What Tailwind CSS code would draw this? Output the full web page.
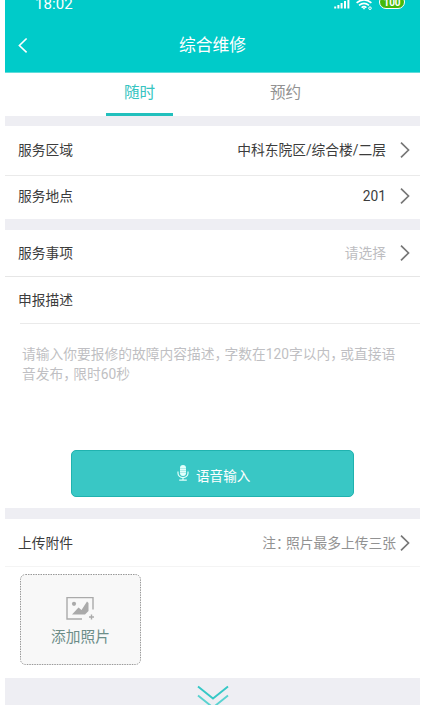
<!DOCTYPE html>
<html lang="zh-CN">
<head>
<meta charset="utf-8">
<meta name="viewport" content="width=device-width, initial-scale=1">
<title>综合维修</title>
<script src="https://cdn.jsdelivr.net/npm/@tailwindcss/browser@4"></script>
</head>
<body class="h-[705px] overflow-hidden bg-white font-['Roboto','Noto_Sans_CJK_SC',sans-serif] text-[13.75px] leading-5 text-[#3c3c3c]">
<main class="ml-[5px] flex h-[705px] w-[415px] flex-col overflow-hidden bg-white">
  <header class="h-[73px] shrink-0 border-b border-[#5fdcda] bg-[#00cbc9] text-white">
    <div class="flex h-[18px] items-start justify-between pr-[15px] pl-[30px]">
      <span class="-mt-[6px] text-[15px] leading-5 tracking-[0.1px]">18:02</span>
      <div class="flex items-start gap-[6px]">
        <svg class="h-[10px] w-[16px]" viewBox="0 0 16 10" fill="none" stroke="#fff" stroke-width="2"><path d="M1.2 8.5V6.5M4.4 8.5V5M7.6 8.5V3M11 8.5V1M14.4 8.5V0"/></svg>
        <svg class="h-[11px] w-[17px]" viewBox="0 0 17 11" fill="none" stroke="#fff" stroke-width="1.7"><path d="M.6 2.8Q8 -3 15.4 2.8M3 5.4Q8 1.5 13 5.4M5.6 7.6Q8 5.6 10.4 7.6"/><circle cx="8" cy="8.4" r=".9" fill="#fff" stroke="none"/><circle cx="14" cy="8.2" r="1.3" stroke-width="1"/></svg>
        <span class="-mt-[5px] flex h-[14px] w-[26px] items-center justify-center rounded-full border border-white bg-[#45b90c] pt-[2px] text-[10px] leading-none font-bold">100</span>
      </div>
    </div>
    <div class="grid h-[54px] grid-cols-[40px_1fr_40px] items-center">
      <svg class="ml-[12px] h-[16px] w-[12px]" viewBox="0 0 12 16" fill="none" stroke="#fff" stroke-width="1.6"><path d="M9.6 1.5 2.4 8.5 9.6 15.3"/></svg>
      <h1 class="text-center text-[16.8px] leading-6">综合维修</h1>
    </div>
  </header>
  <nav class="flex h-[43px] shrink-0 pl-[101px] text-[15.6px]">
    <div class="flex w-[67px] justify-center border-b-[3px] border-[#22c0bd] pt-[10px] text-[#36c4c1]">随时</div>
    <div class="ml-[79px] flex w-[67px] justify-center pt-[10px] text-[#929292]">预约</div>
  </nav>
  <section class="shrink-0 border-t-10 border-[#eeeef3]">
    <div class="flex h-[50px] items-center border-b border-[#eaeaea] pr-[10px] pb-[2px] pl-[13px]">
      <span>服务区域</span><span class="mr-[14px] ml-auto">中科东院区/综合楼/二层</span>
      <svg class="h-[18px] w-[10px]" viewBox="0 0 10 18" fill="none" stroke="#777" stroke-width="1.7"><path d="m1 1.7 7.5 7.3L1 16.3"/></svg>
    </div>
    <div class="flex h-[43px] items-center pr-[10px] pb-[4px] pl-[13px]">
      <span>服务地点</span><span class="mr-[14px] ml-auto">201</span>
      <svg class="h-[18px] w-[10px]" viewBox="0 0 10 18" fill="none" stroke="#777" stroke-width="1.7"><path d="m1 1.7 7.5 7.3L1 16.3"/></svg>
    </div>
  </section>
  <section class="h-[289px] shrink-0 border-t-11 border-[#eeeef3]">
    <div class="flex h-[47px] items-center border-b border-[#e6e6e6] pr-[10px] pl-[13px]">
      <span>服务事项</span><span class="mr-[14px] ml-auto text-[#bdbdc1]">请选择</span>
      <svg class="h-[18px] w-[10px]" viewBox="0 0 10 18" fill="none" stroke="#777" stroke-width="1.7"><path d="m1 1.7 7.5 7.3L1 16.3"/></svg>
    </div>
    <div class="ml-[15px] flex h-[47px] items-center border-b border-[#eaeaea]"><span class="-ml-[2px]">申报描述</span></div>
    <p class="ml-[17px] h-[126px] pt-[20px] whitespace-nowrap text-[#bfbfc3]">请输入你要报修的故障内容描述<span class="tracking-[-3.7px]">，</span>字数在120字以内<span class="tracking-[-3.7px]">，</span>或直接语<br>音发布<span class="tracking-[-3.7px]">，</span>限时60秒</p>
    <button class="ml-[66px] flex h-[47px] w-[283px] items-center rounded-[5px] border border-[#20b2af] bg-[#39c7c5] pt-[5px] pl-[105px] text-white">
      <svg class="-mt-[7px] h-[16px] w-[12px]" viewBox="0 0 12 16"><rect x="3" width="6" height="11" rx="3" fill="#e2fffb"/><path d="M1 6.5v1.7a5 4.5 0 0 0 10 0V6.5M6 13v2M2.2 15.2h7.6" fill="none" stroke="#e2fffb" stroke-width="1.2"/><path d="M3 3.5h6M3 5.5h6M3 7.5h6" stroke="#8fe0de" stroke-width=".6"/></svg>
      <span class="ml-[7px] text-[13.6px]">语音输入</span>
    </button>
  </section>
  <section class="h-[170px] shrink-0 border-t-11 border-[#eeeef3]">
    <div class="flex h-[48px] items-center border-b border-[#f4f4f4] pr-[10px] pl-[13px]">
      <span>上传附件</span><span class="mr-[4px] ml-auto text-[#929292]">注<span class="tracking-[-3.7px]">：</span>照片最多上传三张</span>
      <svg class="h-[18px] w-[10px]" viewBox="0 0 10 18" fill="none" stroke="#777" stroke-width="1.7"><path d="m1 1.7 7.5 7.3L1 16.3"/></svg>
    </div>
    <div class="relative mt-[7px] ml-[15px] flex h-[91px] w-[121px] flex-col items-center">
      <svg class="absolute inset-0 h-[91px] w-[121px]" viewBox="0 0 121 91"><rect x=".5" y=".5" width="120" height="90" rx="5" fill="#f8f8f8" stroke="#999" stroke-dasharray="1.5 1"/></svg>
      <svg class="relative mt-[22px] h-[25px] w-[29px]" viewBox="0 0 29 25"><path d="M16 23H1V1.6h26v12M25.5 18.5v5M23 21h5" fill="none" stroke="#aaa" stroke-width="1.4"/><circle cx="8" cy="7.8" r="2.1" fill="#aaa"/><path d="m6 18.5 6.5-7 3 2.5L21 5.5l1.5 1.5v8L19 18.5z" fill="#aaa"/></svg>
      <span class="relative mt-[6px] text-[14.7px] text-[#6d8d88]">添加照片</span>
    </div>
  </section>
  <footer class="flex flex-1 justify-center bg-[#eeeef3] pt-[7px]">
    <svg class="h-[20px] w-[32px] shrink-0" viewBox="0 0 32 20" fill="none" stroke-width="1.9"><path d="m1 1.5 15 12 15-12" stroke="#35c8c6"/><path d="m1 10.5 15 12 15-12" stroke="#59d2d0"/></svg>
  </footer>
</main>
</body>
</html>
